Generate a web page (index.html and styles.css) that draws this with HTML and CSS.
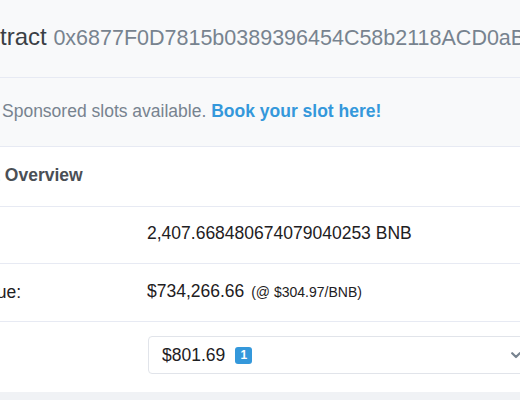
FILE: index.html
```html
<!DOCTYPE html>
<html lang="en">
<head>
<meta charset="utf-8">
<title>Contract</title>
<link rel="stylesheet" href="styles.css">
</head>
<body>
<div class="page">
  <header class="title-bar">
    <h1 class="title">Contract <span class="address">0x6877F0D7815b0389396454C58b2118ACD0aBB5</span></h1>
  </header>
  <div class="sponsor">Sponsored slots available. <a class="sponsor-link" href="#">Book your slot here!</a></div>
  <section class="card">
    <div class="card-header">Contract Overview</div>
    <div class="row">
      <div class="label">Balance:</div>
      <div class="value">2,407.668480674079040253 BNB</div>
    </div>
    <div class="row">
      <div class="label">BNB Value:</div>
      <div class="value">$734,266.66 <span class="small">(@ $304.97/BNB)</span></div>
    </div>
    <div class="row row-last">
      <div class="label">Token:</div>
      <div class="value">
        <div class="select">
          <span class="select-text">$801.69</span>
          <span class="badge">1</span>
          <svg class="chevron" width="10" height="7" viewBox="0 0 10 7"><path d="M1.2 1.2 L5 5 L8.8 1.2" fill="none" stroke="#77838f" stroke-width="2.2" stroke-linecap="round" stroke-linejoin="round"/></svg>
        </div>
      </div>
    </div>
  </section>
</div>
</body>
</html>
```
FILE: styles.css
```css
html, body {
  margin: 0;
  padding: 0;
}
body {
  width: 520px;
  height: 400px;
  overflow: hidden;
  background: #f0f2f5;
  font-family: "Liberation Sans", Arial, Helvetica, sans-serif;
  color: #1e2022;
}
.page {
  margin-left: -90px;
  width: 700px;
}
.title-bar {
  background: #f8f9fa;
  border-bottom: 1px solid #e7eaf3;
  padding: 22px 0 24px 46px;
  white-space: nowrap;
}
.title {
  margin: 0;
  font-size: 24px;
  line-height: 30px;
  font-weight: normal;
  color: #3a3f45;
}
.address {
  font-size: 21.5px;
  color: #77838f;
}
.sponsor {
  background: #f8f9fa;
  border-bottom: 1px solid #e7eaf3;
  padding: 21px 0 23px 92px;
  font-size: 17.5px;
  line-height: 24px;
  color: #77838f;
}
.sponsor-link {
  color: #3498db;
  font-weight: bold;
  text-decoration: none;
}
.card {
  background: #ffffff;
}
.card-header {
  padding: 16px 0 19px 18px;
  font-size: 17.5px;
  line-height: 24px;
  font-weight: bold;
  color: #4a4f55;
  border-bottom: 1px solid #e7eaf3;
}
.row {
  display: flex;
  align-items: center;
  padding: 14px 0 18px 22px;
  border-bottom: 1px solid #e7eaf3;
  font-size: 17.5px;
  line-height: 24px;
}
.row + .row {
  padding-top: 15px;
  padding-bottom: 17px;
}
.row.row-last {
  border-bottom: none;
  padding-top: 14px;
  padding-bottom: 18px;
}
.label {
  width: 215px;
  flex: none;
}
.value {
  flex: 1;
  white-space: nowrap;
}
.small {
  font-size: 14px;
  margin-left: 2px;
}
.select {
  display: flex;
  align-items: center;
  box-sizing: border-box;
  width: 384px;
  height: 38px;
  margin-left: 1px;
  padding: 0 10px 0 13px;
  border: 1px solid #e1e4ea;
  border-radius: 4px;
  background: #fff;
}
.badge {
  display: inline-flex;
  align-items: center;
  justify-content: center;
  width: 17px;
  height: 17px;
  margin-left: 10px;
  border-radius: 3px;
  background: #3498db;
  color: #fff;
  font-size: 12px;
  font-weight: bold;
  line-height: 1;
}
.chevron {
  margin-left: auto;
}
```
